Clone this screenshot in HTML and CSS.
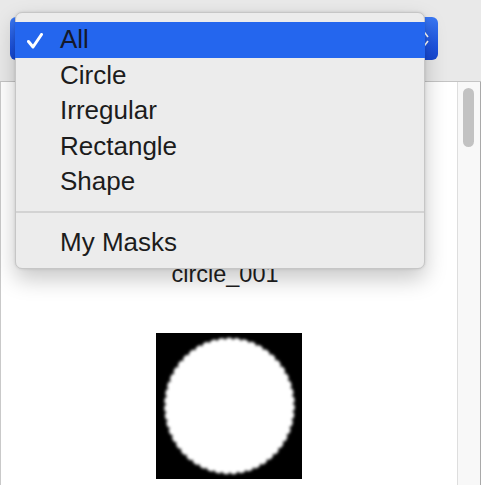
FILE: index.html
```html
<!DOCTYPE html>
<html>
<head>
<meta charset="utf-8">
<link rel="stylesheet" href="styles.css">
</head>
<body>
<div class="window">
  <div class="toolbar">
    <div class="popup">
      <svg class="arrows" width="8" height="16" viewBox="0 0 8 16"><path d="M1 6 L4 2 L7 6 M1 10 L4 14 L7 10" fill="none" stroke="#fff" stroke-width="1.6"/></svg>
    </div>
  </div>
  <div class="content">
    <div class="main">
      <div class="tile">
        <svg class="thumb" width="146" height="146" viewBox="0 0 146 146"><rect width="146" height="146" fill="#000"/></svg>
        <div class="label">circle_001</div>
      </div>
      <div class="tile">
        <svg class="thumb" width="146" height="146" viewBox="0 0 146 146">
          <defs><filter id="soft" x="-10%" y="-10%" width="120%" height="120%"><feGaussianBlur stdDeviation="1.5"/></filter></defs>
          <rect width="146" height="146" fill="#000"/>
          <ellipse cx="73.5" cy="73" rx="63.5" ry="66.5" fill="#fff" stroke="#fff" stroke-width="3.5" stroke-dasharray="3 5" stroke-linecap="round" filter="url(#soft)"/>
        </svg>
      </div>
    </div>
    <div class="scrollbar"><div class="knob"></div></div>
  </div>

  <div class="menu">
    <div class="item selected">
      <svg class="check" width="16" height="16" viewBox="0 0 16 16"><path d="M1.5 8.5 L6 14 L14.5 1.5" fill="none" stroke="#fff" stroke-width="3" stroke-linecap="round" stroke-linejoin="round"/></svg>
      <span>All</span>
    </div>
    <div class="item"><span>Circle</span></div>
    <div class="item"><span>Irregular</span></div>
    <div class="item"><span>Rectangle</span></div>
    <div class="item"><span>Shape</span></div>
    <div class="sep"></div>
    <div class="item"><span>My Masks</span></div>
  </div>
</div>
</body>
</html>
```

FILE: styles.css
```css
* { box-sizing: border-box; }
html, body {
  margin: 0;
  padding: 0;
  width: 481px;
  height: 485px;
  overflow: hidden;
  font-family: "Liberation Sans", Arial, sans-serif;
}
.window {
  position: relative;
  width: 481px;
  height: 485px;
  display: flex;
  flex-direction: column;
  background: #fff;
}
.toolbar {
  height: 82px;
  flex: none;
  background: #e9e9e9;
  border-bottom: 1px solid #c4c4c4;
  padding: 17px 43px 0 10px;
}
.popup {
  height: 43px;
  border-radius: 6px;
  background: linear-gradient(#3a78f4, #1d53e0 70%, #1747cf);
  display: flex;
  align-items: center;
  justify-content: flex-end;
  padding-right: 9px;
}
.arrows { display: block; }
.content {
  flex: 1;
  display: flex;
  min-height: 0;
}
.main {
  flex: 1;
  border-left: 1px solid #c9c9c9;
  display: flex;
  flex-direction: column;
  align-items: center;
  padding-top: 24px;
  gap: 45px;
  overflow: hidden;
}
.tile {
  display: flex;
  flex-direction: column;
  align-items: center;
  gap: 8px;
  flex: none;
}
.thumb {
  display: block;
  margin-left: -1px;
}
.label {
  font-size: 23.5px;
  line-height: 28px;
  color: #1e1e1e;
  margin-right: 8px;
}
.scrollbar {
  width: 24px;
  flex: none;
  background: #f8f8f8;
  border-left: 1px solid #dedede;
  border-right: 1px solid #a9a9a9;
  padding: 6px 0 0 5px;
}
.knob {
  width: 11px;
  height: 59px;
  border-radius: 6px;
  background: #c2c2c2;
}
.menu {
  position: absolute;
  left: 15px;
  top: 12px;
  width: 410px;
  padding: 9px 0 8px;
  background: #ececec;
  border: 1px solid #c6c6c6;
  border-radius: 7px;
  box-shadow: 0 10px 22px rgba(0, 0, 0, 0.22), 0 0 3px rgba(0, 0, 0, 0.12);
}
.item {
  position: relative;
  height: 35.5px;
  display: flex;
  align-items: center;
  padding-left: 44px;
  font-size: 26px;
  color: #1c1c1c;
}
.item.selected {
  background: #2466ee;
  margin: 0 -1px;
  padding-left: 45px;
  color: #15192a;
}
.check {
  position: absolute;
  left: 12px;
  top: 11px;
}
.sep {
  height: 25px;
  display: flex;
  align-items: center;
}
.sep::before {
  content: "";
  display: block;
  width: 100%;
  height: 2px;
  background: #d3d3d3;
}
```
